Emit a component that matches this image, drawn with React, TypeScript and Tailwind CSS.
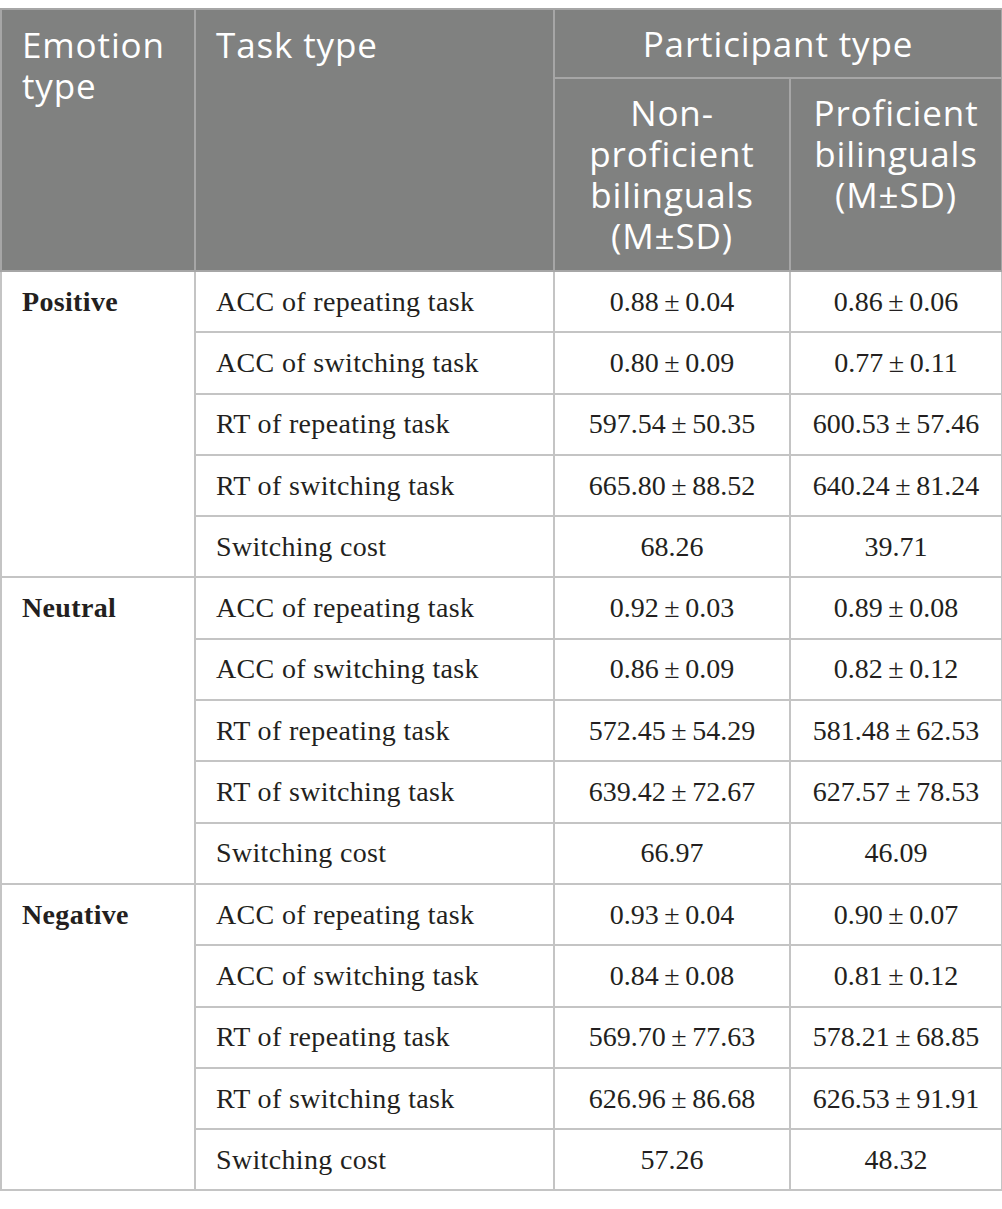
import React from "react";

type Row = { task: string; non: string; pro: string };
type Group = { emotion: string; rows: Row[] };

const groups: Group[] = [
  {
    emotion: "Positive",
    rows: [
      { task: "ACC of repeating task", non: "0.88 ± 0.04", pro: "0.86 ± 0.06" },
      { task: "ACC of switching task", non: "0.80 ± 0.09", pro: "0.77 ± 0.11" },
      { task: "RT of repeating task", non: "597.54 ± 50.35", pro: "600.53 ± 57.46" },
      { task: "RT of switching task", non: "665.80 ± 88.52", pro: "640.24 ± 81.24" },
      { task: "Switching cost", non: "68.26", pro: "39.71" },
    ],
  },
  {
    emotion: "Neutral",
    rows: [
      { task: "ACC of repeating task", non: "0.92 ± 0.03", pro: "0.89 ± 0.08" },
      { task: "ACC of switching task", non: "0.86 ± 0.09", pro: "0.82 ± 0.12" },
      { task: "RT of repeating task", non: "572.45 ± 54.29", pro: "581.48 ± 62.53" },
      { task: "RT of switching task", non: "639.42 ± 72.67", pro: "627.57 ± 78.53" },
      { task: "Switching cost", non: "66.97", pro: "46.09" },
    ],
  },
  {
    emotion: "Negative",
    rows: [
      { task: "ACC of repeating task", non: "0.93 ± 0.04", pro: "0.90 ± 0.07" },
      { task: "ACC of switching task", non: "0.84 ± 0.08", pro: "0.81 ± 0.12" },
      { task: "RT of repeating task", non: "569.70 ± 77.63", pro: "578.21 ± 68.85" },
      { task: "RT of switching task", non: "626.96 ± 86.68", pro: "626.53 ± 91.91" },
      { task: "Switching cost", non: "57.26", pro: "48.32" },
    ],
  },
];

// thin space around ± like the typeset original
const fmt = (s: string) => s.replace(" ± ", "\u2009±\u2009");

export default function App() {
  return (
    <div className="bg-white w-[1002px] h-[1209px] pt-2">
      <table className="w-[1001px] table-fixed border-collapse font-['Liberation_Serif',serif] text-[28px] text-[#231f20]">
        <colgroup>
          <col className="w-[194px]" />
          <col className="w-[359px]" />
          <col className="w-[236px]" />
          <col className="w-[212px]" />
        </colgroup>
        <thead className="bg-[#808180] text-white font-['Open_Sans',sans-serif] text-[35px] tracking-[0.025em] leading-[41px] font-normal">
          <tr className="h-[69px]">
            <th rowSpan={2} className="border-2 border-[#a6a6a6] align-top text-left font-normal px-[20px] pt-[14px]">
              Emotion type
            </th>
            <th rowSpan={2} className="border-2 border-[#a6a6a6] align-top text-left font-normal px-[20px] pt-[14px]">
              Task type
            </th>
            <th colSpan={2} className="border-2 border-[#a6a6a6] text-center font-normal px-2">
              Participant type
            </th>
          </tr>
          <tr className="h-[193px]">
            <th className="border-2 border-[#a6a6a6] align-top text-center font-normal px-5 pt-[13px]">
              Non-proficient bilinguals (M±SD)
            </th>
            <th className="border-2 border-[#a6a6a6] align-top text-center font-normal px-2 pt-[13px]">
              Proficient bilinguals (M±SD)
            </th>
          </tr>
        </thead>
        <tbody>
          {groups.map((g) =>
            g.rows.map((r, i) => (
              <tr key={g.emotion + i} className="h-[61.3px]">
                {i === 0 && (
                  <td rowSpan={g.rows.length} className="border-2 border-[#c4c4c4] align-top font-bold tracking-[0.012em] px-[20px] pt-[13px] leading-[34px]">
                    {g.emotion}
                  </td>
                )}
                <td className="border-2 border-[#c4c4c4] px-[20px] tracking-[0.012em] leading-[34px]">{r.task}</td>
                <td className="border-2 border-[#c4c4c4] text-center leading-[34px]">{fmt(r.non)}</td>
                <td className="border-2 border-[#c4c4c4] text-center leading-[34px]">{fmt(r.pro)}</td>
              </tr>
            ))
          )}
        </tbody>
      </table>
    </div>
  );
}
